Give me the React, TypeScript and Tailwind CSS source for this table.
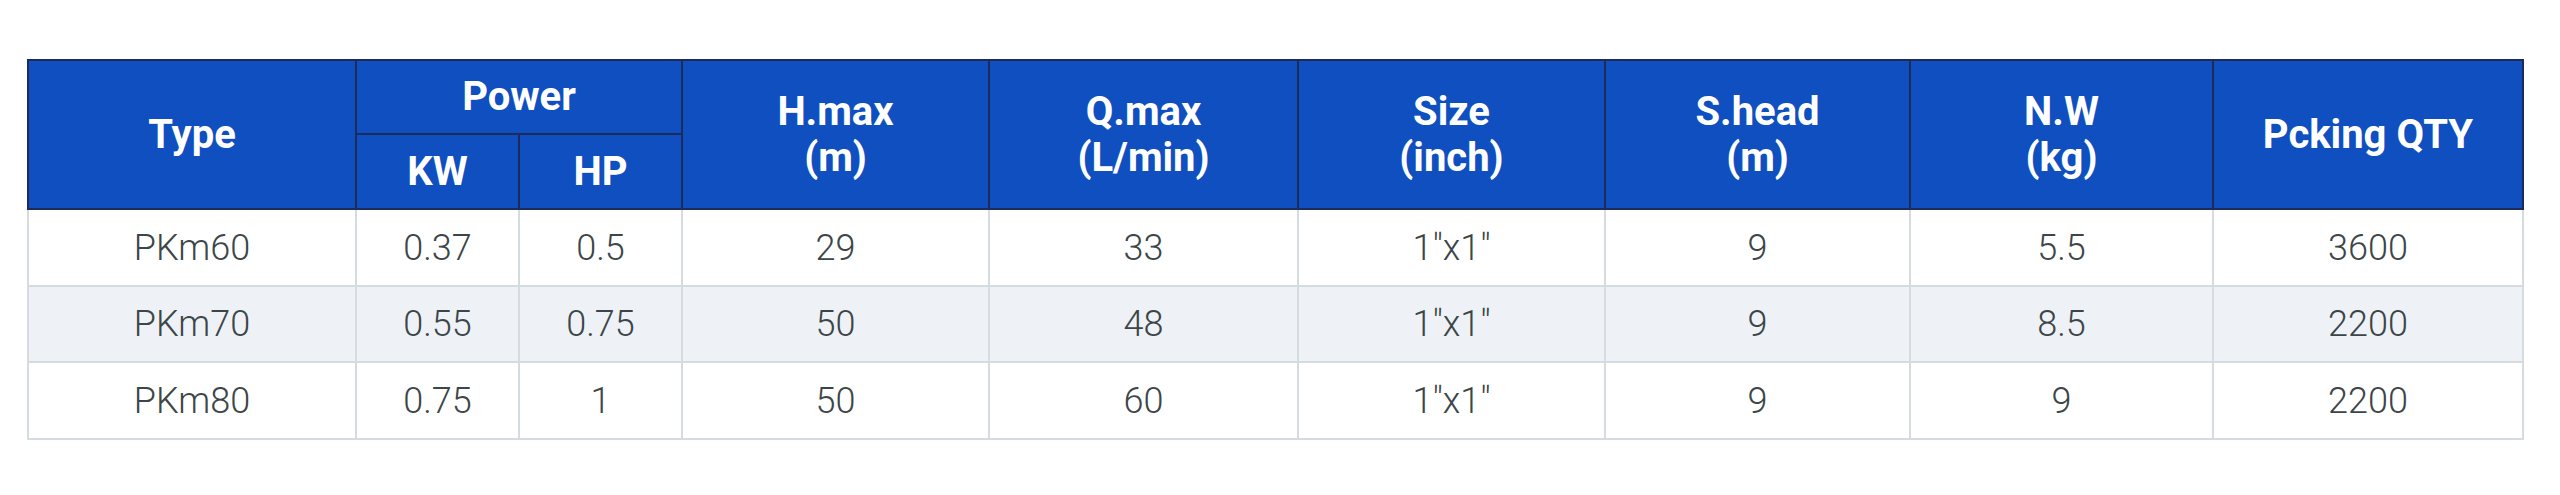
import React from "react";

const rows = [
  ["PKm60", "0.37", "0.5", "29", "33", "1\"x1\"", "9", "5.5", "3600"],
  ["PKm70", "0.55", "0.75", "50", "48", "1\"x1\"", "9", "8.5", "2200"],
  ["PKm80", "0.75", "1", "50", "60", "1\"x1\"", "9", "9", "2200"],
];

const widths = [328, 163, 163, 307, 309, 307, 305, 303, 310];

export default function App() {
  const th =
    "bg-[#0f4fc0] text-white font-bold text-[40px] leading-[46px] border-2 border-[#1c2a5c] text-center align-middle p-0";
  const td =
    "border-2 border-[#d4dcdf] text-center align-middle text-[36px] text-[#3c4547] font-light p-0";
  return (
    <div className="w-[2560px] h-[495px] bg-white pt-[59px] pl-[27px]">
      <table
        className="border-collapse table-fixed"
        style={{ fontFamily: "Roboto, 'Liberation Sans', sans-serif" }}
      >
        <colgroup>
          {widths.map((w, i) => (
            <col key={i} style={{ width: w }} />
          ))}
        </colgroup>
        <thead>
          <tr className="h-[74px]">
            <th rowSpan={2} className={th}>Type</th>
            <th colSpan={2} className={th}>Power</th>
            <th rowSpan={2} className={th}>H.max<br />(m)</th>
            <th rowSpan={2} className={th}>Q.max<br />(L/min)</th>
            <th rowSpan={2} className={th}>Size<br />(inch)</th>
            <th rowSpan={2} className={th}>S.head<br />(m)</th>
            <th rowSpan={2} className={th}>N.W<br />(kg)</th>
            <th rowSpan={2} className={th}>Pcking QTY</th>
          </tr>
          <tr className="h-[75px]">
            <th className={th}>KW</th>
            <th className={th}>HP</th>
          </tr>
        </thead>
        <tbody>
          {rows.map((r, i) => (
            <tr key={i} className={i === 1 ? "h-[76px] bg-[#eef2f7]" : "h-[77px] bg-white"}>
              {r.map((c, j) => (
                <td key={j} className={td}>{c}</td>
              ))}
            </tr>
          ))}
        </tbody>
      </table>
    </div>
  );
}
